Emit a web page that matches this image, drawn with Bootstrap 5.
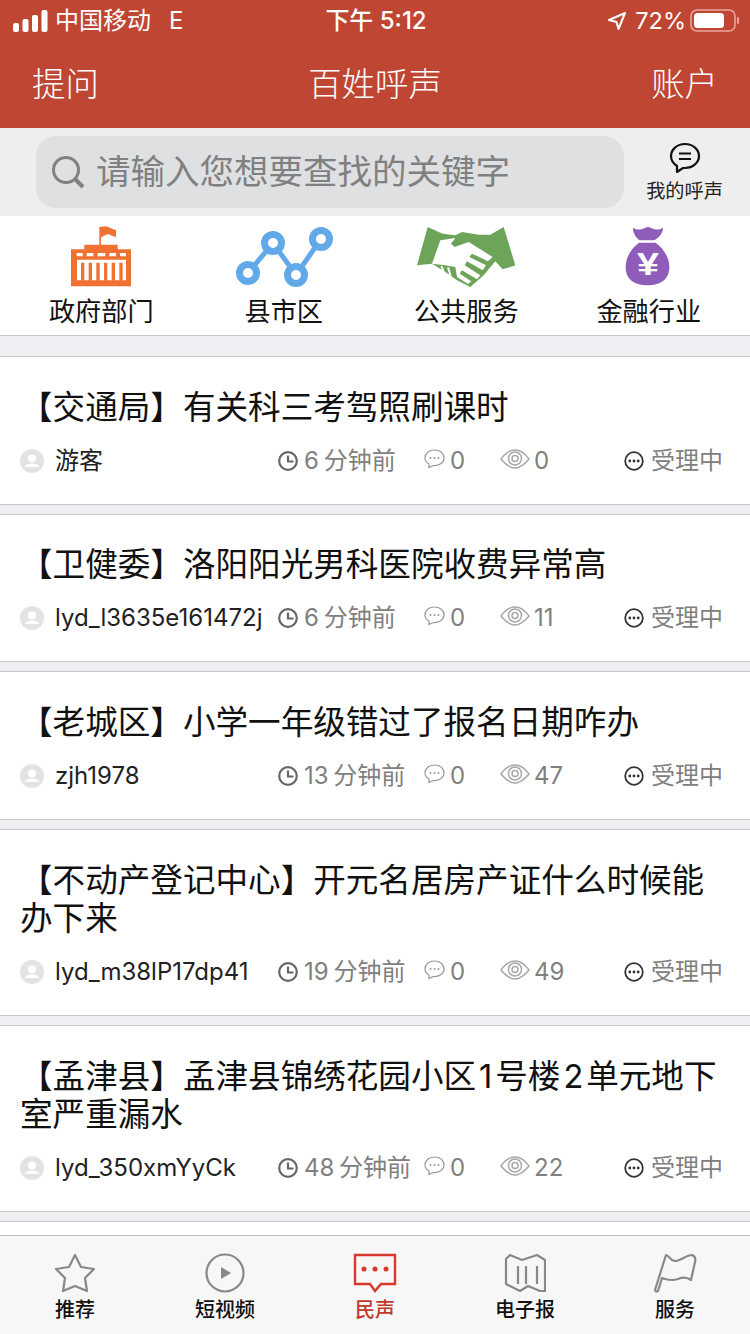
<!DOCTYPE html>
<html lang="zh-CN">

<head>
    <meta charset="UTF-8" />
    <title>百姓呼声</title>
    <link href="https://cdn.jsdelivr.net/npm/bootstrap@5.3.2/dist/css/bootstrap.min.css" rel="stylesheet" />
    <style>
        body { width: 750px; height: 1334px; overflow: hidden; background: #efeff4; font-family: Inter, "Noto Sans CJK SC", sans-serif; color: #111; }
        .pagina { height: 1334px; }
        .cabecera { height: 128px; background: #bf4633; color: #fff; }
        .estado { height: 40px; padding: 2px 11px 0 13px; font-size: 24px; line-height: 38px; }
        .lado { flex: 1 1 0; }
        .senal { margin-right: 7px; }
        .tipo-red { margin-left: 18px; }
        .bateria-txt { font-size: 23.5px; }
        .hora { font-weight: 500; font-size: 24px; }
        .barra-titulo { height: 88px; padding: 3px 32px 0 32px; font-size: 33.4px; font-family: "Liberation Serif", "Noto Sans CJK SC", serif; font-weight: 300; }
        .zona-busqueda { height: 88px; padding: 8px 0 8px 36px; background: #eeeeee; }
        .caja-busqueda { width: 588px; height: 72px; background: #dfe0e2; border-radius: 20px; padding-left: 15px; color: #808080; font-size: 34.5px; }
        .lupa { margin-right: 11px; }
        .mi-voz { width: 121px; font-size: 19.2px; line-height: 24px; color: #222; padding-top: 6px; }
        .mi-voz span { margin-top: 5px; }
        .categorias { height: 120px; background: #fff; border-bottom: 1px solid #c8c8cc; padding-top: 10px; }
        .categoria { width: 182.5px; font-size: 26.2px; line-height: 32px; }
        .icono-cat { height: 62px; margin-bottom: 8px; }
        .listado { min-height: 0; padding-top: 20px; }
        .aviso { background: #fff; border-top: 1px solid #c8c8cc; border-bottom: 1px solid #c8c8cc; margin-bottom: 9px; padding: 30.5px 20px 0 20px; flex-shrink: 0; }
        .aviso-vacio { height: 60px; }
        .aviso-titulo { font-size: 32.6px; line-height: 38.3px; margin: 0; font-weight: 400; color: #111; }
        .aviso-meta { height: 77.9px; font-size: 24px; color: #808080; padding-bottom: 25px; }
        .col-autor { width: 258px; color: #222; }
        .col-autor svg { margin-right: 11px; }
        .col-hora { width: 146px; }
        .col-hora svg { margin-right: 6px; }
        .col-hora span { word-spacing: -2px; }
        .col-coment { width: 76px; }
        .col-coment svg { margin: 0 5px 4px 0; }
        .col-vistas { width: 124px; }
        .col-vistas svg { margin: 0 4px 4px 0; }
        .col-estado svg { margin-right: 7px; }
        .pestanas { height: 99px; flex-shrink: 0; background: #f7f7f7; border-top: 1px solid #bfbfbf; }
        .pestana { width: 150px; font-size: 20px; font-weight: 500; line-height: 26px; padding-top: 17px; color: #111; }
        .pestana.activa { color: #c0392b; }
        .pestana svg { margin-bottom: 4px; }
    </style>
</head>

<body>
    <div class="pagina d-flex flex-column">
        <header class="cabecera flex-shrink-0">
            <div class="estado d-flex align-items-center">
                <div class="lado d-flex align-items-center">
                    <svg width="35" height="22" viewBox="0 0 35 22" class="senal" fill="#fff">
                        <rect x="0" y="13" width="6" height="9" rx="2" />
                        <rect x="9.5" y="9" width="6" height="13" rx="2" />
                        <rect x="19" y="5" width="6" height="17" rx="2" />
                        <rect x="28.5" y="0" width="6" height="22" rx="2" />
                    </svg>
                    <span>中国移动</span>
                    <span class="tipo-red">E</span>
                </div>
                <span class="hora">下午 5:12</span>
                <div class="lado d-flex align-items-center justify-content-end">
                    <svg width="20" height="20" viewBox="0 0 20 20" fill="none" stroke="#fff" stroke-width="2" class="me-2">
                        <path d="M18 2 L2 9 L9.5 11 L11.5 18 Z" stroke-linejoin="round" />
                    </svg>
                    <span class="bateria-txt">72%</span>
                    <svg width="49" height="24" viewBox="0 0 49 24" fill="none" class="ms-1">
                        <rect x="1" y="1" width="44" height="21" rx="6" stroke="#e5a79c" stroke-width="1.6" />
                        <rect x="4" y="4" width="30" height="15" rx="3.5" fill="#fff" />
                        <rect x="47" y="8" width="2" height="7" rx="1" fill="#e5a79c" />
                    </svg>
                </div>
            </div>
            <div class="barra-titulo d-flex justify-content-between align-items-center">
                <span>提问</span>
                <span>百姓呼声</span>
                <span>账户</span>
            </div>
        </header>

        <div class="zona-busqueda d-flex flex-shrink-0">
            <div class="caja-busqueda d-flex align-items-center">
                <svg width="34" height="34" viewBox="0 0 34 34" fill="none" stroke="#808080" class="lupa flex-shrink-0">
                    <circle cx="15" cy="15" r="12.5" stroke-width="3" />
                    <path d="M24 24 L32 32" stroke-width="4" />
                </svg>
                <span>请输入您想要查找的关键字</span>
            </div>
            <div class="mi-voz d-flex flex-column align-items-center">
                <svg width="32" height="32" viewBox="0 0 32 32" fill="none" stroke="#111" stroke-width="2.2">
                    <path d="M16 2 C8 2 2 7.500 2 14 C2 19 5 22 8 24 L8 30 L14 26 C15 26 15.500 26 16 26 C24 26 30 20.500 30 14 C30 7.500 24 2 16 2 Z" stroke-linejoin="round" />
                    <path d="M10 11.500 H22 M10 17 H22" />
                </svg>
                <span>我的呼声</span>
            </div>
        </div>

        <nav class="categorias d-flex justify-content-center flex-shrink-0">
            <div class="categoria d-flex flex-column align-items-center">
                <div class="icono-cat">
                    <svg width="70" height="62" viewBox="0 12 210 186">
                        <path fill="#f07131" d="M100 15 L120 13 L150 25 V46 L125 36 L105 46 V68 H155 V82 H195 V193 H15 V82 H55 V68 H100 Z" />
                        <path fill="#fff" d="M32 93 H50 V103 H32 Z M62 93 H82 V103 H62 Z M95 93 H118 V103 H95 Z M130 93 H150 V103 H130 Z M162 93 H180 V103 H162 Z" />
                        <path fill="#fff" d="M33 113 H180 V175 H33 Z" />
                        <path stroke="#f07131" stroke-width="10" d="M50 122 V176 M73 122 V176 M96 122 V176 M119 122 V176 M142 122 V176 M165 122 V176" />
                    </svg>
                </div>
                <span>政府部门</span>
            </div>
            <div class="categoria d-flex flex-column align-items-center">
                <div class="icono-cat">
                    <svg width="98" height="62" viewBox="0 0 98 62" fill="none" stroke="#62a9e9">
                        <path stroke-width="5" d="M13 47 L38 17 L61 49 L86 13" />
                        <g fill="#fff" stroke-width="7">
                            <circle cx="13" cy="47" r="8.500" />
                            <circle cx="38" cy="17" r="8.500" />
                            <circle cx="61" cy="49" r="8.500" />
                            <circle cx="86" cy="13" r="8.500" />
                        </g>
                    </svg>
                </div>
                <span>县市区</span>
            </div>
            <div class="categoria d-flex flex-column align-items-center">
                <div class="icono-cat">
                    <svg width="110" height="62" viewBox="-3 12 330 186">
                        <path fill="#6ca55a" d="M47 15 L92 35 L130 40 L150 30 L200 38 L235 38 L275 15 L310 130 L272 142 L250 118 L215 160 L175 195 L135 175 L100 150 L60 125 L15 130 Z" />
                        <path fill="#fff" d="M85 55 L130 48 L117 65 L128 75 L170 60 L242 105 L228 118 L180 95 L172 105 L222 130 L212 145 L165 118 L158 130 L205 160 L195 172 L150 145 L143 155 L178 178 L168 186 L135 165 L130 135 L100 130 L60 125 Z" />
                        <path stroke="#fff" stroke-width="6" d="M88 132 L96 152 M108 136 L116 162" />
                    </svg>
                </div>
                <span>公共服务</span>
            </div>
            <div class="categoria d-flex flex-column align-items-center">
                <div class="icono-cat">
                    <svg width="60" height="62" viewBox="0 12 180 186">
                        <path fill="#8f5cba" d="M42 17 C52 24 62 24 72 20 L87 14 L102 20 C112 24 122 24 132 17 C132 35 118 48 105 55 H62 C52 48 42 35 42 17 Z" />
                        <path fill="#8f5cba" d="M60 62 H110 C132 78 151 105 151 135 C151 175 120 190 85 190 C50 190 20 175 20 135 C20 105 38 78 60 62 Z" />
                        <text x="87" y="160" text-anchor="middle" font-size="96" font-weight="700" fill="#fff" font-family="Liberation Sans" textLength="66" lengthAdjust="spacingAndGlyphs">¥</text>
                    </svg>
                </div>
                <span>金融行业</span>
            </div>
        </nav>

        <main id="listado" class="listado flex-grow-1 overflow-hidden d-flex flex-column"></main>

        <footer class="pestanas d-flex">
            <div class="pestana d-flex flex-column align-items-center">
                <svg width="42" height="40" viewBox="0 0 42 40" fill="none" stroke="#888" stroke-width="2.200" stroke-linejoin="round">
                    <path d="M21 2 L27 14 L40 16 L31 25 L33 38 L21 33 L9 38 L11 25 L2 16 L15 14 Z" />
                </svg>
                <span>推荐</span>
            </div>
            <div class="pestana d-flex flex-column align-items-center">
                <svg width="40" height="40" viewBox="0 0 40 40" fill="none" stroke="#888" stroke-width="2.200">
                    <circle cx="20" cy="20" r="18.500" />
                    <path d="M16 14 L26 20 L16 26 Z" fill="#888" stroke="none" />
                </svg>
                <span>短视频</span>
            </div>
            <div class="pestana activa d-flex flex-column align-items-center">
                <svg width="44" height="40" viewBox="0 0 44 40" fill="none" stroke="#d9392c" stroke-width="2.400">
                    <path d="M2 2 H42 V31 H28 L22 38 L17 31 H2 Z" />
                    <g fill="#d9392c" stroke="none">
                        <circle cx="11" cy="16" r="2.500" />
                        <circle cx="22" cy="16" r="2.500" />
                        <circle cx="33" cy="16" r="2.500" />
                    </g>
                </svg>
                <span>民声</span>
            </div>
            <div class="pestana d-flex flex-column align-items-center">
                <svg width="42" height="40" viewBox="0 0 42 40" fill="none" stroke="#888" stroke-width="2.200" stroke-linejoin="round">
                    <path d="M2 6 L6 2 L18 7 L33 2 L41 7 V38 L36 38 L24 33 L16 38 L2 31 Z" />
                    <path d="M14 13 V31 M22 13 V31 M33 13 V31" />
                </svg>
                <span>电子报</span>
            </div>
            <div class="pestana d-flex flex-column align-items-center">
                <svg width="44" height="40" viewBox="0 0 44 40" fill="none" stroke="#888" stroke-width="2.200" stroke-linejoin="round">
                    <path d="M2 37 L13 2 C16 2 17 8 22 8 C28 8 33 2 39 2 C42 3 43 5 42 9 L38 27 C34 24 30 24 25 26 C19 28 14 27 9 25 L5 38 C3 39 2 38 2 37 Z" />
                </svg>
                <span>服务</span>
            </div>
        </footer>
    </div>

    <script>
        const avisos = [
            { titulo: '【交通局】有关科三考驾照刷课时', autor: '游客', hora: '6 分钟前', coment: 0, vistas: 0 },
            { titulo: '【卫健委】洛阳阳光男科医院收费异常高', autor: 'lyd_l3635e161472j', hora: '6 分钟前', coment: 0, vistas: 11 },
            { titulo: '【老城区】小学一年级错过了报名日期咋办', autor: 'zjh1978', hora: '13 分钟前', coment: 0, vistas: 47 },
            { titulo: '【不动产登记中心】开元名居房产证什么时候能办下来', autor: 'lyd_m38lP17dp41', hora: '19 分钟前', coment: 0, vistas: 49 },
            { titulo: '【孟津县】孟津县锦绣花园小区\u200a1\u200a号楼\u200a2\u200a单元地下室严重漏水', autor: 'lyd_350xmYyCk', hora: '48 分钟前', coment: 0, vistas: 22 }
        ];
        const iconos = {
            autor: `<svg width="24" height="24" viewBox="0 0 24 24" class="flex-shrink-0"><circle cx="12" cy="12" r="12" fill="#e3e3e3"/><circle cx="12" cy="9.500" r="4" fill="#fff"/><path d="M4.500 18 C6 15 9 15 12 14.500 C15 15 18 15 19.500 18 Z" fill="#fff"/></svg>`,
            hora: `<svg width="20" height="20" viewBox="0 0 20 20" fill="none" stroke="#666" stroke-width="2.200" class="flex-shrink-0"><circle cx="10" cy="10" r="8.800"/><path d="M10 4.500 V10.500 H15.500"/></svg>`,
            coment: `<svg width="21" height="20" viewBox="0 0 21 20" fill="none" stroke="#999" stroke-width="1.200" class="flex-shrink-0"><path d="M10.500 1 C5 1 1 4.500 1 9 C1 12 3 14 5 15 L5 18.500 L9 16.500 C15 17 20 14 20 9 C20 4.500 16 1 10.500 1 Z"/><g fill="#999" stroke="none"><circle cx="6.500" cy="9" r="1"/><circle cx="10.500" cy="9" r="1"/><circle cx="14.500" cy="9" r="1"/></g></svg>`,
            vistas: `<svg width="30" height="20" viewBox="0 0 30 20" fill="none" stroke="#a8a8a8" stroke-width="1.500" class="flex-shrink-0"><path d="M1 10 C6 3 11 1 15 1 C19 1 24 3 29 10 C24 16 19 19 15 19 C11 19 6 16 1 10 Z"/><circle cx="15" cy="9.500" r="6.500"/><circle cx="15" cy="9.500" r="3"/></svg>`,
            estado: `<svg width="20" height="20" viewBox="0 0 20 20" fill="none" stroke="#333" stroke-width="1.800" class="flex-shrink-0"><circle cx="10" cy="10" r="8.800"/><g fill="#333" stroke="none"><circle cx="5.800" cy="10" r="1.400"/><circle cx="10" cy="10" r="1.400"/><circle cx="14.200" cy="10" r="1.400"/></g></svg>`
        };
        const listado = document.getElementById('listado');
        avisos.forEach(a => {
            const fila = document.createElement('article');
            fila.className = 'aviso';
            fila.innerHTML = `<h2 class="aviso-titulo">${a.titulo}</h2>
                <div class="aviso-meta d-flex align-items-end">
                    <div class="col-autor d-flex align-items-center">${iconos.autor}<span>${a.autor}</span></div>
                    <div class="col-hora d-flex align-items-center">${iconos.hora}<span>${a.hora}</span></div>
                    <div class="col-coment d-flex align-items-center">${iconos.coment}<span>${a.coment}</span></div>
                    <div class="col-vistas d-flex align-items-center">${iconos.vistas}<span>${a.vistas}</span></div>
                    <div class="col-estado d-flex align-items-center">${iconos.estado}<span>受理中</span></div>
                </div>`;
            listado.appendChild(fila);
        });
        // la siguiente tarjeta queda cortada por la barra inferior
        const vacia = document.createElement('article');
        vacia.className = 'aviso aviso-vacio';
        listado.appendChild(vacia);
    </script>
    <script src="https://cdn.jsdelivr.net/npm/bootstrap@5.3.2/dist/js/bootstrap.bundle.min.js"></script>
</body>

</html>
